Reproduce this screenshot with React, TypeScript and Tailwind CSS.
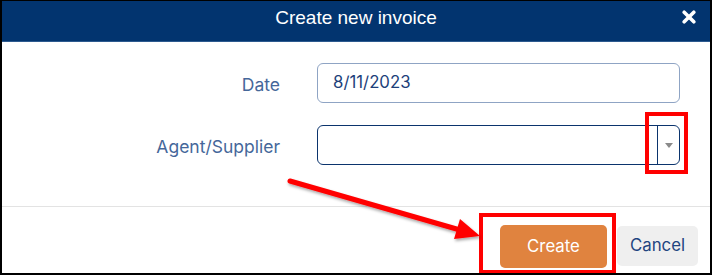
import React from "react";

export default function App() {
  return (
    <div
      className="relative w-[712px] h-[275px] border-l-2 border-r-2 border-t border-b-2 border-black bg-white flex flex-col overflow-hidden"
      style={{ fontFamily: "Inter, 'Noto Sans', sans-serif" }}
    >
      {/* Header */}
      <div className="relative h-[41px] shrink-0 bg-[#02346f] flex justify-center pt-[7px] border-b border-[#2d5a8f]">
        <span
          className="text-white text-[19px] leading-[20px]"
          style={{ fontFamily: "'Liberation Sans', Arial, sans-serif" }}
        >
          Create new invoice
        </span>
        <svg
          className="absolute right-[14px] top-[9px]"
          width="14"
          height="14"
          viewBox="0 0 14 14"
        >
          <path d="M2.2 2.2 L11.8 11.8 M11.8 2.2 L2.2 11.8" stroke="#fff" strokeWidth="3.6" strokeLinecap="round" />
        </svg>
      </div>

      {/* Body */}
      <div className="h-[164px] shrink-0 pt-[21px] flex flex-col gap-[22px]">
        <div className="flex items-center">
          <label className="w-[278px] pt-[5px] text-right text-[17.5px] text-[#45679a]">Date</label>
          <div className="ml-[37px] w-[363px] h-[40px] rounded-[6px] border border-[#8fa4c4] flex items-center pl-[15px] text-[16.8px] text-[#1d3f7a]">
            8/11/2023
          </div>
        </div>
        <div className="flex items-center">
          <label className="w-[278px] pt-[5px] text-right text-[17.5px] text-[#45679a]">Agent/Supplier</label>
          <div className="ml-[37px] w-[363px] h-[40px] rounded-[6px] border border-[#0b346d] flex">
            <div className="flex-1" />
            <div className="w-[22px] border-l border-[#0b346d] flex items-center justify-center">
              <div className="w-0 h-0 border-l-[4px] border-r-[4px] border-t-[5px] border-l-transparent border-r-transparent border-t-[#8a8a8a]" />
            </div>
          </div>
        </div>
      </div>

      {/* Footer */}
      <div className="flex-1 border-t border-[#e3e3e3] flex justify-end items-start pt-[18px] pr-[12px] gap-[10px]">
        <button className="w-[107px] h-[43px] rounded-[5px] bg-[#e0833f] text-white text-[16.8px]">
          Create
        </button>
        <button className="mt-px w-[81px] h-[40px] rounded-[5px] bg-[#efefef] text-[#1f4580] text-[16.8px]">
          Cancel
        </button>
      </div>

      {/* Annotations */}
      <div className="absolute left-[643px] top-[111px] w-[43px] h-[62px] border-4 border-[#ff0000] pointer-events-none" />
      <div className="absolute left-[477px] top-[212px] w-[137px] h-[61px] border-4 border-[#ff0000] pointer-events-none" />
      <svg
        className="absolute left-[-2px] top-[-1px] pointer-events-none"
        width="712"
        height="275"
        viewBox="0 0 712 275"
      >
        <defs>
          <filter id="sh" x="-10%" y="-20%" width="120%" height="140%">
            <feDropShadow dx="1" dy="2" stdDeviation="1.5" floodColor="#000" floodOpacity="0.35" />
          </filter>
        </defs>
        <g filter="url(#sh)">
          <line x1="290" y1="181" x2="460" y2="230" stroke="#ff0000" strokeWidth="5" strokeLinecap="round" />
          <polygon points="480,236 454,239 460,219" fill="#ff0000" />
        </g>
      </svg>
    </div>
  );
}
